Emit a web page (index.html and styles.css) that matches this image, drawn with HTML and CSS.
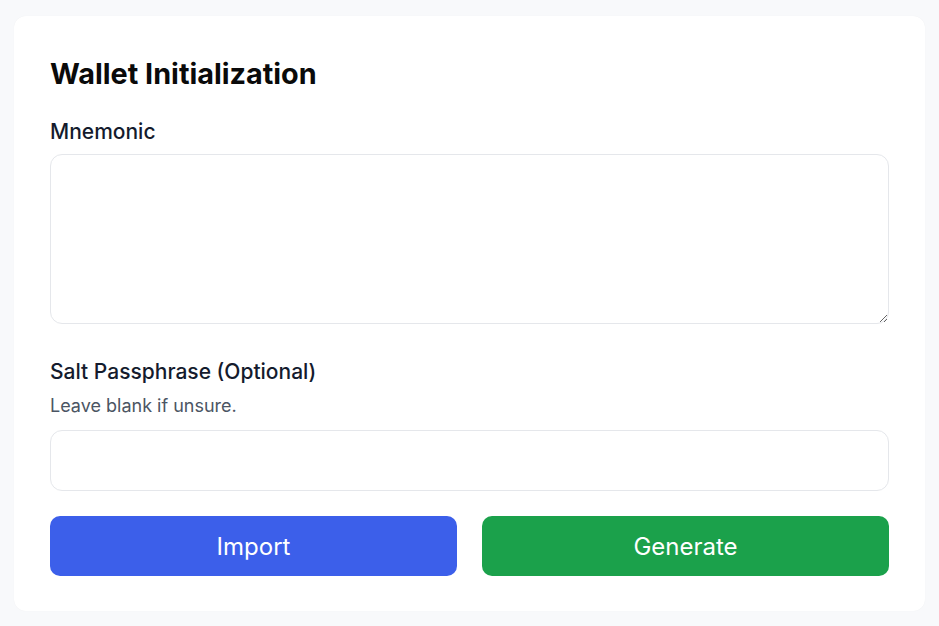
FILE: index.html
```html
<!DOCTYPE html>
<html>
<head>
<meta charset="utf-8">
<link rel="stylesheet" href="styles.css">
</head>
<body>
<div class="card">
  <h1 class="title">Wallet Initialization</h1>
  <div class="field field-mnemonic">
    <label class="label">Mnemonic</label>
    <textarea class="textarea"></textarea>
  </div>
  <div class="field field-salt">
    <label class="label">Salt Passphrase (Optional)</label>
    <p class="hint">Leave blank if unsure.</p>
    <input class="input" type="text">
  </div>
  <div class="actions">
    <button class="btn btn-import">Import</button>
    <button class="btn btn-generate">Generate</button>
  </div>
</div>
</body>
</html>
```
FILE: styles.css
```css
html, body {
  margin: 0;
  background: #f8f9fb;
}
body {
  padding: 16px 14px 15px;
  font-family: Inter, "Noto Sans", sans-serif;
  box-sizing: border-box;
}
.card {
  background: #fff;
  border-radius: 12px;
  padding: 36px 36px 35px;
  box-shadow: 0 0 1px rgba(0,0,0,0.06);
}
.title {
  margin: 0 0 23px;
  font-size: 28.8px;
  font-weight: 700;
  line-height: 43px;
  color: #0a0a0a;
}
.field {
  display: flex;
  flex-direction: column;
}
.field-mnemonic {
  margin-bottom: 33px;
}
.field-salt {
  margin-bottom: 25px;
}
.label {
  font-size: 21px;
  font-weight: 450;
  line-height: 30px;
  color: #141b2d;
  margin-bottom: 7px;
}
.field-mnemonic .label {
  margin-top: -1px;
}
.field-salt .label {
  margin-bottom: 0;
}
.hint {
  margin: 6px 0 11px;
  font-size: 18px;
  line-height: 26px;
  color: #4b5563;
}
.textarea, .input {
  box-sizing: border-box;
  width: 100%;
  border: 1px solid #e5e7eb;
  border-radius: 12px;
  background: #fff;
  font-family: inherit;
  font-size: 18px;
  outline: none;
}
.textarea {
  height: 170px;
  resize: vertical;
  display: block;
}
.input {
  height: 61px;
  padding: 0 16px;
}
.actions {
  display: grid;
  grid-template-columns: 1fr 1fr;
  gap: 25px;
}
.btn {
  height: 60px;
  border: none;
  border-radius: 10px;
  color: #fff;
  font-family: inherit;
  font-size: 24px;
  font-weight: 400;
}
.btn-import {
  background: #3c5fea;
}
.btn-generate {
  background: #1ba14b;
}
```
